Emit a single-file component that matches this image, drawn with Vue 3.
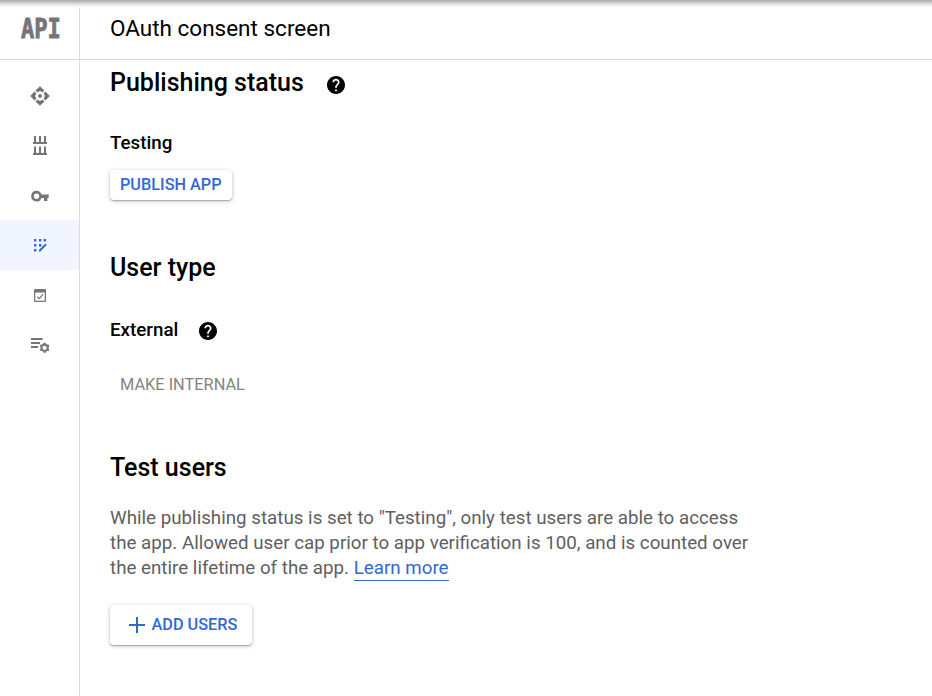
<script setup>
const navItems = [
  { id: 'dashboard', label: 'Enabled APIs' },
  { id: 'library', label: 'Library' },
  { id: 'credentials', label: 'Credentials' },
  { id: 'consent', label: 'Consent screen', active: true },
  { id: 'verification', label: 'Domain verification' },
  { id: 'agreements', label: 'Page usage agreements' },
]
const helpPath =
  'M12 2C6.48 2 2 6.48 2 12s4.48 10 10 10 10-4.48 10-10S17.52 2 12 2zm1 17h-2v-2h2v2zm2.07-7.75l-.9.92C13.45 12.9 13 13.5 13 15h-2v-.5c0-1.1.45-2.1 1.17-2.83l1.24-1.26c.37-.36.59-.86.59-1.41 0-1.1-.9-2-2-2s-2 .9-2 2H8c0-2.21 1.79-4 4-4s4 1.79 4 4c0 .88-.36 1.68-.93 2.25z'
</script>

<template>
  <div class="page">
    <aside class="sidebar">
      <div class="logo"><span>API</span></div>
      <nav>
        <a v-for="item in navItems" :key="item.id" class="nav-item" :class="{ active: item.active }" :aria-label="item.label">
          <svg v-if="item.id === 'dashboard'" class="low" width="20" height="20" viewBox="0 0 20 20">
            <path d="M10 .2 14.4 4.6 12.5 6.5 10 4.6 7.5 6.5 5.6 4.6zM10 19.8 14.4 15.4 12.5 13.5 10 15.4 7.5 13.5 5.6 15.4zM.2 10 4.6 5.6 6.5 7.5 4.6 10 6.5 12.5 4.6 14.4zM19.8 10 15.4 5.6 13.5 7.5 15.4 10 13.5 12.5 15.4 14.4z" />
            <path d="M10 1 13 4.5 10 5.5 7 4.5zM10 19 13 15.5 10 14.5 7 15.5zM1 10 4.5 7 5.5 10 4.5 13zM19 10 15.5 7 14.5 10 15.5 13z" />
            <circle cx="10" cy="10" r="1.9" />
          </svg>
          <svg v-else-if="item.id === 'library'" width="20" height="20" viewBox="0 0 20 20">
            <path d="M4 1h2v6h3V1h2v6h3V1h2v6h1v2H3V7h1zM4 11.5h2V18h3v-6.500h2V18h3v-6.500h2V18h1v2H3v-2h1z" />
          </svg>
          <svg v-else-if="item.id === 'credentials'" class="low" width="20" height="20" viewBox="0 0 20 20">
            <path fill-rule="evenodd" d="M6.500 4.800a5.300 5.300 0 1 0 5 7.100H14v3h3.400v-3h1.300V8.600h-7.200a5.300 5.300 0 0 0-5-3.800zm0 2.700a2.700 2.700 0 1 1 0 5.400 2.700 2.700 0 0 1 0-5.400z" />
          </svg>
          <svg v-else-if="item.id === 'consent'" width="20" height="20" viewBox="0 0 20 20">
            <path d="M4 4h2.400v2.400H4zM9 4h2.400v2.400H9zM13.600 4H16v2.400h-2.400zM4 9h2.400v2.400H4zM9 9h2.400v2.400H9zM4 14h2.400v2.400H4z" />
            <path d="M9.200 16.200 16 9.300" fill="none" stroke="currentColor" stroke-width="2" />
          </svg>
          <svg v-else-if="item.id === 'verification'" width="20" height="20" viewBox="0 0 20 20">
            <path fill-rule="evenodd" d="M5 4h10a1 1 0 0 1 1 1v11a1 1 0 0 1-1 1H5a1 1 0 0 1-1-1V5a1 1 0 0 1 1-1zm.300 3.400v8.300h9.400V7.400z" />
            <path d="m7.200 11.600 2 2 3.800-4.200" fill="none" stroke="currentColor" stroke-width="1.3" />
          </svg>
          <svg v-else width="20" height="20" viewBox="0 0 20 20">
            <path d="M1 3h11.500v2H1zM1 7h9v2H1zM1 11h7v2H1z" />
            <circle cx="14.6" cy="12.8" r="3.1" fill="none" stroke="currentColor" stroke-width="1.9" />
            <g stroke="currentColor" stroke-width="2.4">
              <path d="M14.600 9.900V7.800M14.600 15.700v2.100M17.100 11.400l1.800-1.100M12.100 14.200l-1.800 1.100M12.100 11.400l-1.800-1.100M17.100 14.200l1.800 1.100" />
            </g>
          </svg>
        </a>
      </nav>
    </aside>
    <div class="body">
      <header>OAuth consent screen</header>
      <main>
        <section class="publishing">
          <h2>Publishing status <svg class="help" viewBox="2 2 20 20"><path :d="helpPath" /></svg></h2>
          <h3>Testing</h3>
          <button class="raised publish">PUBLISH APP</button>
        </section>
        <section class="type">
          <h2>User type</h2>
          <h3>External <svg class="help" viewBox="2 2 20 20"><path :d="helpPath" /></svg></h3>
          <button class="flat">MAKE INTERNAL</button>
        </section>
        <section class="testers">
          <h2>Test users</h2>
          <p>While publishing status is set to "Testing", only test users are able to access<br />the app. Allowed user cap prior to app verification is 100, and is counted over<br />the entire lifetime of the app. <a class="link">Learn more</a></p>
          <button class="raised add">
            <svg width="16" height="16" viewBox="0 0 16 16"><path d="M7 0h2v7h7v2H9v7H7V9H0V7h7z" /></svg>ADD USERS
          </button>
        </section>
      </main>
    </div>
    <div class="top-shade"></div>
  </div>
</template>

<style>
body { margin: 0; background: #fff; }
</style>

<style scoped>
.page { display: flex; height: 696px; overflow: hidden; position: relative; font-family: Roboto, sans-serif; color: #000; }
.top-shade { position: absolute; top: 0; left: 0; right: 0; height: 8px; background: linear-gradient(#aaa, #c4c4c4 25%, #e4e4e4 55%, #f8f8f8 80%, rgba(255, 255, 255, 0)); }
.sidebar { box-sizing: border-box; width: 80px; flex: none; border-right: 1px solid #dcdcdc; }
.logo { box-sizing: border-box; height: 60px; padding: 13px 0 0 21px; border-bottom: 1px solid #dcdcdc; }
.logo span { display: inline-block; font: bold 26px/32px "DejaVu Sans Mono", monospace; color: #757575; -webkit-text-stroke: .8px #757575; transform: scaleX(.85); transform-origin: left; }
nav { padding-top: 10px; }
.nav-item { display: flex; align-items: center; justify-content: center; height: 50px; padding-left: 1px; color: #757575; }
.nav-item .low { margin-top: 1px; }
.nav-item.active { background: #f0f5ff; color: #3367d6; }
svg { fill: currentColor; }
.body { flex: 1; }
header { box-sizing: border-box; height: 60px; padding: 13px 0 0 30px; border-bottom: 1px solid #dcdcdc; font-size: 22.5px; line-height: 30px; }
main { padding-left: 30px; }
section { display: flex; flex-direction: column; align-items: flex-start; }
h2 { display: flex; margin: 0; font-size: 25px; font-weight: 500; line-height: 30px; }
h3 { display: flex; margin: 0; font-size: 18.75px; font-weight: 500; line-height: 24px; }
.help { width: 18px; height: 18px; }
h2 .help { margin: 8px 0 0 23px; }
h3 .help { margin: 4px 0 0 21px; }
.publishing { padding-top: 8px; }
.publishing h3 { margin-top: 33px; }
button { display: flex; align-items: center; border: 0; padding: 0 10px; background: #fff; font: 500 16.25px Roboto, sans-serif; white-space: nowrap; }
.raised { border-radius: 4px; color: #3367d6; box-shadow: 0 1px 4px rgba(0, 0, 0, .25), 0 1px 1px rgba(0, 0, 0, .22); }
.publish { width: 122px; height: 30px; margin-top: 15px; padding-bottom: 2px; }
.type { padding-top: 53px; }
.type h3 { margin-top: 35px; }
.flat { height: 30px; margin-top: 27px; color: #848484; font-weight: 400; font-size: 16.35px; }
.testers { padding-top: 54px; }
p { margin: 23px 0 0; font-size: 18.75px; line-height: 25px; color: #5f5f5f; white-space: nowrap; }
.link { color: #3367d6; border-bottom: 1px solid #3367d6; padding-bottom: 1px; }
.add { width: 142px; height: 40px; margin-top: 24px; padding: 0 0 1px 18.5px; gap: 7px; }
</style>
